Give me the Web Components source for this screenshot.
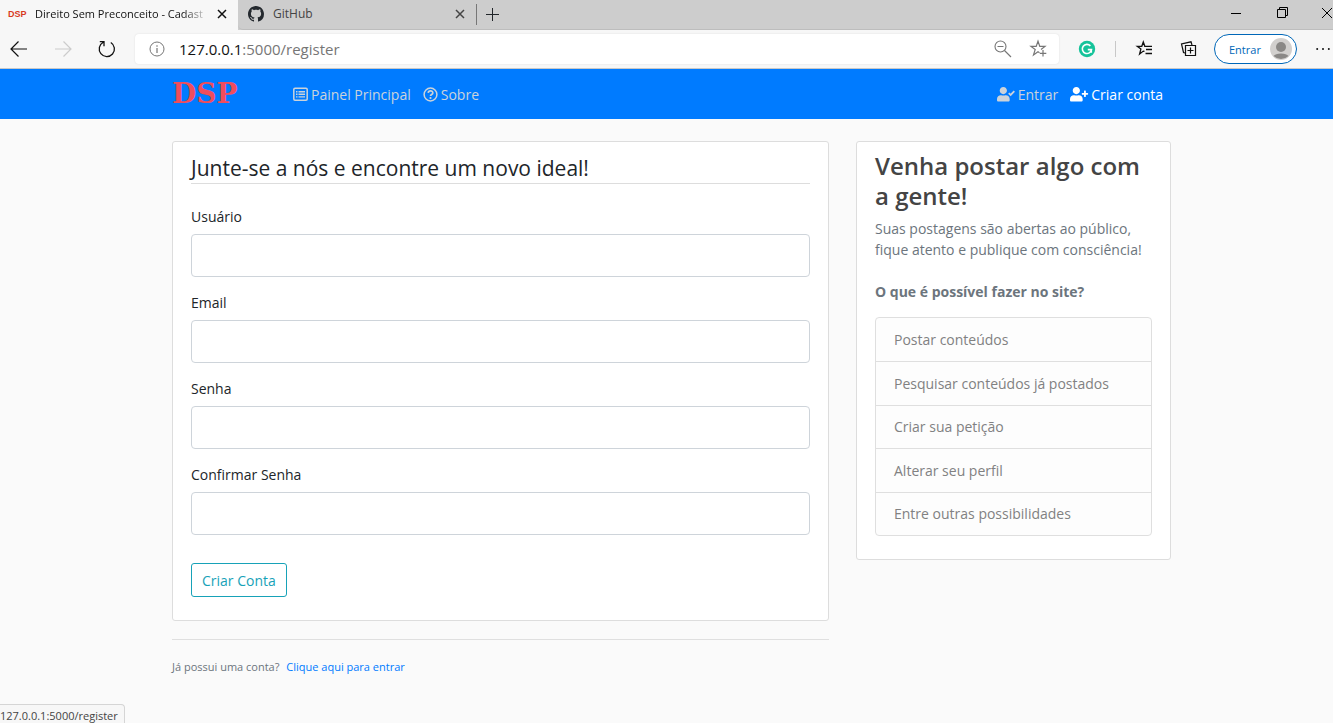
<!DOCTYPE html>
<html lang="pt-BR">
<head>
<meta charset="utf-8">
<title>Direito Sem Preconceito - Cadastro</title>
<style>
html,body{margin:0;min-height:100%}
body{background:#fafafa;font-family:"Open Sans","Noto Sans",sans-serif;font-size:14px;line-height:21px;color:#212529;overflow-x:hidden}
</style>
</head>
<body>
<dsp-app></dsp-app>
<script>
const icons = {
  back:[18,18,'<path d="M1 9H17M8.500 1.500L1 9l7.500 7.500" fill="none" stroke="currentColor" stroke-width="1.200"/>'],
  forward:[18,18,'<path d="M1 9H17M9.500 1.500L17 9l-7.500 7.500" fill="none" stroke="currentColor" stroke-width="1.200"/>'],
  reload:[18,18,'<path d="M12.800 2.500A7.600 7.600 0 1 1 5.200 2.300M1.800 1.700H6v4.600" fill="none" stroke="currentColor" stroke-width="1.300"/>'],
  info:[16,16,'<circle cx="8" cy="8" r="7" fill="none" stroke="currentColor"/><path d="M8 7v5M8 4.300v1.500" stroke="currentColor" stroke-width="1.200"/>'],
  close:[10,10,'<path d="M1 1l8 8M9 1L1 9" stroke="currentColor" stroke-width="1.500"/>'],
  plus:[14,14,'<path d="M6.500 0v13M0 6.500h13" stroke="currentColor" stroke-width="1"/>'],
  min:[10,10,'<path d="M0 5.500h10" stroke="currentColor"/>'],
  restore:[11,11,'<path d="M.5 2.500h8v8h-8zM2.500 2.500v-2h8v8h-2" fill="none" stroke="currentColor"/>'],
  winclose:[12,12,'<path d="M1 1l10 10M11 1L1 11" stroke="currentColor"/>'],
  search:[18,18,'<circle cx="6.500" cy="6.500" r="5.500" fill="none" stroke="currentColor" stroke-width="1.100"/><path d="M10.500 10.500L17 17M3.500 6.500h6" stroke="currentColor" stroke-width="1.200"/>'],
  staradd:[18,18,'<path d="M9.500 12.700L8 11.700l-4.500 3.200 1.700-5.400L1 6.400h5.200L8 1.200l1.800 5.200H15L11 9.500" fill="none" stroke="currentColor" stroke-width="1.200"/><path d="M13 10v6.500M9.800 13.300h6.500" stroke="currentColor" stroke-width="1.200"/>'],
  grammar:[18,18,'<circle cx="9" cy="9" r="8.200" fill="#15c39a"/><path d="M12.400 5.900A4.600 4.600 0 1 0 13.500 9.600H9.800M13.300 9.500v3.200" fill="none" stroke="#fff" stroke-width="1.600"/>'],
  favs:[18,18,'<path d="M8.500 11.400L7.300 11.100 3.600 14l1.300-5L1.300 6.300h4.500L7.300 2l1.500 4.300H16M10 9.500h6M9.500 13.500H16" fill="none" stroke="currentColor" stroke-width="1.300"/>'],
  collect:[18,18,'<path d="M5.500 5.500h10v10h-10zM10.500 7.500v6M7.500 10.500h6M5 13L3.500 12.500 1.500 4 11 1.800l1 3.200" fill="none" stroke="currentColor" stroke-width="1.200"/>'],
  person:[22,22,'<circle cx="11" cy="11" r="11" fill="#d2d0ce"/><circle cx="11" cy="9" r="5" fill="#8a8886"/><path d="M3.500 18a8 4 0 0 1 15 0A11 11 0 0 1 3.500 18z" fill="#8a8886"/>'],
  dots:[14,4,'<circle cx="1.200" cy="2" r="1" fill="currentColor"/><circle cx="7" cy="2" r="1" fill="currentColor"/><circle cx="12.800" cy="2" r="1" fill="currentColor"/>'],
  github:[16,16,'<path fill="currentColor" d="M8 0C3.580 0 0 3.580 0 8c0 3.540 2.290 6.530 5.470 7.590.4.070.55-.17.55-.38 0-.19-.01-.82-.01-1.490-2.010.37-2.530-.49-2.690-.94-.09-.23-.48-.94-.82-1.130-.28-.15-.68-.52-.01-.53.63-.01 1.080.58 1.230.82.72 1.210 1.870.87 2.330.66.07-.52.28-.87.51-1.070-1.780-.2-3.640-.89-3.640-3.950 0-.87.31-1.590.82-2.150-.08-.2-.36-1.020.08-2.120 0 0 .67-.21 2.200.82.64-.18 1.320-.27 2-.27s1.360.09 2 .27c1.530-1.040 2.200-.82 2.200-.82.44 1.100.16 1.920.08 2.120.51.56.82 1.270.82 2.150 0 3.070-1.870 3.750-3.650 3.950.29.25.54.73.54 1.480 0 1.070-.01 1.930-.01 2.200 0 .21.15.46.55.38A8.010 8.010 0 0 0 16 8c0-4.420-3.580-8-8-8z"/>'],
  list:[15,15,'<rect x=".8" y="1.300" width="13.400" height="12" rx="1.200" fill="none" stroke="currentColor" stroke-width="1.500"/><path d="M5.500 4.700H12M5.500 7.300H12M5.500 9.900H12M3 4.700h1.500M3 7.300h1.500M3 9.900h1.500" stroke="currentColor" stroke-width="1.400"/>'],
  help:[15,15,'<circle cx="7.500" cy="7.500" r="6.400" fill="none" stroke="currentColor" stroke-width="1.500"/><path d="M5.200 5.900c.2-2.700 4.700-2.600 4.600 0 0 1.600-2.300 1.400-2.300 3" fill="none" stroke="currentColor" stroke-width="1.700"/><circle cx="7.500" cy="11" r="1.100" fill="currentColor"/>'],
  usercheck:[18,15,'<g transform="scale(.0283)"><path fill="currentColor" d="M224 256c70.700 0 128-57.300 128-128S294.700 0 224 0 96 57.300 96 128s57.300 128 128 128zm89.600 32h-16.700c-22.200 10.200-46.900 16-72.900 16s-50.600-5.800-72.900-16h-16.700C60.200 288 0 348.200 0 422.400V464c0 26.500 21.500 48 48 48h352c26.500 0 48-21.500 48-48v-41.600c0-74.200-60.200-134.400-134.400-134.400z"/><path d="M415 216l67 66 130-134" fill="none" stroke="currentColor" stroke-width="62"/></g>'],
  userplus:[18,15,'<g transform="scale(.0283)"><path fill="currentColor" d="M624 208h-64v-64c0-8.800-7.200-16-16-16h-32c-8.800 0-16 7.200-16 16v64h-64c-8.800 0-16 7.200-16 16v32c0 8.800 7.200 16 16 16h64v64c0 8.800 7.200 16 16 16h32c8.800 0 16-7.200 16-16v-64h64c8.800 0 16-7.200 16-16v-32c0-8.800-7.200-16-16-16zm-400 48c70.700 0 128-57.300 128-128S294.700 0 224 0 96 57.300 96 128s57.300 128 128 128zm89.600 32h-16.700c-22.200 10.200-46.900 16-72.900 16s-50.600-5.800-72.900-16h-16.700C60.200 288 0 348.200 0 422.400V464c0 26.500 21.500 48 48 48h352c26.500 0 48-21.500 48-48v-41.600c0-74.200-60.200-134.400-134.400-134.400z"/></g>']
};
const base = '*{box-sizing:border-box}button{font:inherit;color:inherit;background:none;border:0;padding:0;margin:0;display:flex;align-items:center;justify-content:center}';
function define(name, css, html){
  customElements.define(name, class extends HTMLElement{
    constructor(){
      super();
      this.attachShadow({mode:'open'}).innerHTML = `<style>${base}${css}</style>${html}`;
    }
  });
}

customElements.define('ui-icon', class extends HTMLElement{
  connectedCallback(){
    if(this.shadowRoot) return;
    const [w,h,body] = icons[this.getAttribute('name')];
    this.attachShadow({mode:'open'}).innerHTML =
      `<style>:host{display:block;flex:none}svg{display:block;overflow:visible}</style><svg width="${w}" height="${h}" viewBox="0 0 ${w} ${h}" aria-hidden="true">${body}</svg>`;
  }
});

define('browser-tab', `
:host{display:flex;align-items:center;flex:0 1 238px;height:30px;padding:0 11px 2px 8px;font-size:12px;line-height:18px;color:#444;border-radius:0 0 0 5px;border-bottom:1px solid #bdbdbd;min-width:0}
:host([active]){background:#f7f7f7;color:#111;border-radius:0;border-color:#f7f7f7;font-size:11px}
.icon{width:27px;flex:none;display:flex}
.title{flex:1;white-space:nowrap;overflow:hidden;margin-right:8px}
:host([active]) .title{-webkit-mask-image:linear-gradient(90deg,#000 85%,transparent);mask-image:linear-gradient(90deg,#000 85%,transparent)}
`, `<span class="icon"><slot name="icon"></slot></span><span class="title"><slot></slot></span><button aria-label="Fechar guia"><ui-icon name="close"></ui-icon></button>`);

define('tab-strip', `
:host{display:flex;height:30px;background:#cdcdcd;overflow:hidden}
.fav{font:bold 9px/18px "Liberation Sans",sans-serif;color:#d83b1f}
.gh{color:#24292e;margin-left:2px}
.rest{display:flex;flex:1;border-bottom:1px solid #bdbdbd;align-items:center}
.sep{width:1px;height:21px;background:#777;margin-right:9px}
.win{display:flex;align-items:center;margin-left:auto;color:#000}
.win button{width:46px;height:28px;padding-bottom:4px}
.win .x{width:28px;justify-content:flex-start;padding-left:16px}
`, `<browser-tab active><span slot="icon" class="fav">DSP</span>Direito Sem Preconceito - Cadast</browser-tab>
<browser-tab><ui-icon slot="icon" class="gh" name="github"></ui-icon>GitHub</browser-tab>
<div class="rest"><span class="sep"></span><button aria-label="Nova guia"><ui-icon name="plus"></ui-icon></button>
<div class="win"><button aria-label="Minimizar"><ui-icon name="min"></ui-icon></button><button aria-label="Restaurar"><ui-icon name="restore"></ui-icon></button><button class="x" aria-label="Fechar"><ui-icon name="winclose"></ui-icon></button></div></div>`);

define('tool-bar', `
:host{display:flex;align-items:center;gap:6px;height:39px;background:#f7f7f7;border-bottom:1px solid #c8c8c8;color:#111}
button{width:38px;height:30px;flex:none}
.off{color:#ccc}
.omni{flex:1;display:flex;align-items:center;height:30px;margin:0 3px;padding:0 11px 0 14px;background:#fff;border-radius:4px;box-shadow:0 0 2px #ddd;color:#767676}
.url{flex:1;margin-left:14px;font-size:15px;line-height:22px;white-space:nowrap}
.url b{font-weight:400;color:#111}
.omni button{width:36px}.omni button:last-child{width:18px;margin-left:9px}
.sep{width:1px;height:16px;background:#c8c8c8;margin:0 4px 0 3px}
.me{width:83px;border:1px solid #0067b8;border-radius:15px;background:#fff;color:#0067b8;font-size:11px;justify-content:space-between;padding:0 4px 0 14px}
.more{width:30px;justify-content:flex-start;padding-left:13px}
`, `<button aria-label="Voltar"><ui-icon name="back"></ui-icon></button><button class="off" aria-label="Avançar"><ui-icon name="forward"></ui-icon></button><button aria-label="Atualizar"><ui-icon name="reload"></ui-icon></button>
<div class="omni"><ui-icon name="info"></ui-icon><span class="url"><b>127.0.0.1</b>:5000/register</span><button aria-label="Zoom"><ui-icon name="search"></ui-icon></button><button aria-label="Adicionar aos favoritos"><ui-icon name="staradd"></ui-icon></button></div>
<button aria-label="Grammarly"><ui-icon name="grammar"></ui-icon></button><span class="sep"></span><button aria-label="Favoritos"><ui-icon name="favs"></ui-icon></button><button aria-label="Coleções"><ui-icon name="collect"></ui-icon></button>
<button class="me">Entrar<ui-icon name="person"></ui-icon></button><button class="more" aria-label="Mais"><ui-icon name="dots"></ui-icon></button>`);

define('page-width', `:host{display:block;padding-left:10px}div{max-width:999px;margin:0 auto}`, `<div><slot></slot></div>`);

define('nav-link', `:host{display:block}::slotted(a){display:flex;align-items:center;gap:3px;color:#cbd3da;text-decoration:none;white-space:nowrap}:host([active]) ::slotted(a){color:#fff}`, `<slot></slot>`);

define('site-nav', `
:host{display:block;background:#007bff}
nav{display:flex;align-items:center;height:50px;gap:12px;padding-right:8px}
.brand{width:109px;font:bold 28px/32px "DejaVu Serif",serif;color:#f04d5c;text-decoration:none}
.push{margin-left:auto}
`, `<page-width><nav><a class="brand" href="#">DSP</a>
<nav-link><a href="#"><ui-icon name="list"></ui-icon>Painel Principal</a></nav-link>
<nav-link><a href="#"><ui-icon name="help"></ui-icon>Sobre</a></nav-link>
<nav-link class="push"><a href="#"><ui-icon name="usercheck"></ui-icon>Entrar</a></nav-link>
<nav-link active><a href="#"><ui-icon name="userplus"></ui-icon>Criar conta</a></nav-link></nav></page-width>`);

define('content-card', `:host{display:block;background:#fff;border:1px solid #ddd;border-radius:3px;padding:9px 18px 23px}`, `<slot></slot>`);

customElements.define('form-field', class extends HTMLElement{
  constructor(){
    super();
    this.attachShadow({mode:'open'}).innerHTML = `<style>${base}:host{display:block}label{display:block;line-height:22px;margin-bottom:6px}input{display:block;width:100%;height:43px;border:1px solid #ced4da;border-radius:4px;background:#fff;padding:7px 14px;font:inherit;font-size:18px}</style><label for="f"><slot></slot></label><input id="f">`;
  }
  connectedCallback(){ this.shadowRoot.querySelector('input').type = this.getAttribute('type') || 'text'; }
});

define('register-form', `
:host{display:block}
form{display:flex;flex-direction:column;gap:15px}
h1{margin:0 0 7px;font-size:21px;line-height:34px;font-weight:400;border-bottom:1px solid #ddd;height:33px}
.go{align-self:flex-start;margin-top:13px;height:34px;padding:0 10px;border:1px solid #17a2b8;border-radius:3px;color:#17a2b8}
`, `<form><h1>Junte-se a nós e encontre um novo ideal!</h1>
<form-field>Usuário</form-field><form-field type="email">Email</form-field><form-field type="password">Senha</form-field><form-field type="password">Confirmar Senha</form-field>
<button class="go" type="button">Criar Conta</button></form>`);

define('side-info', `
:host{display:block;color:#6c757d}
h2{margin:0 0 7px;font-size:24px;line-height:30px;font-weight:600;color:#444}
p{margin:0 0 21px}
h3{margin:0 0 15px;font-size:14px;line-height:21px;font-weight:700}
ul{display:grid;grid-auto-rows:1fr;min-height:219px;margin:0;padding:0;list-style:none;border:1px solid #dfdfdf;border-radius:4px;background:#fdfdfd;color:#818182}
li{display:flex;align-items:center;padding:10px 18px}
li+li{border-top:1px solid #dfdfdf}
`, `<h2>Venha postar algo com a gente!</h2><p>Suas postagens são abertas ao público,<br>fique atento e publique com consciência!</p><h3>O que é possível fazer no site?</h3>
<ul><li>Postar conteúdos</li><li>Pesquisar conteúdos já postados</li><li>Criar sua petição</li><li>Alterar seu perfil</li><li>Entre outras possibilidades</li></ul>`);

define('status-tip', `:host{position:fixed;left:0;bottom:0;padding:3px 6px 0 0;border:1px solid #d5d5d5;border-width:1px 1px 0 0;border-radius:0 4px 0 0;background:#f7f7f7;font-size:11px;line-height:15px;color:#444}`, `<slot></slot>`);

define('dsp-app', `
:host{display:block}
main{display:grid;grid-template-columns:minmax(0,1fr) 315px;gap:27px;align-items:start;padding-top:22px}
.login{border-top:1px solid #dfdfdf;margin-top:18px;padding-top:18px;font-size:11px;line-height:18px;color:#6c757d}
a{color:#007bff;text-decoration:none;margin-left:4px}
`, `<tab-strip></tab-strip><tool-bar></tool-bar><site-nav></site-nav>
<page-width><main><section><content-card><register-form></register-form></content-card><div class="login">Já possui uma conta? <a href="#">Clique aqui para entrar</a></div></section>
<content-card><side-info></side-info></content-card></main></page-width>
<status-tip>127.0.0.1:5000/register</status-tip>`);
</script>
</body>
</html>
